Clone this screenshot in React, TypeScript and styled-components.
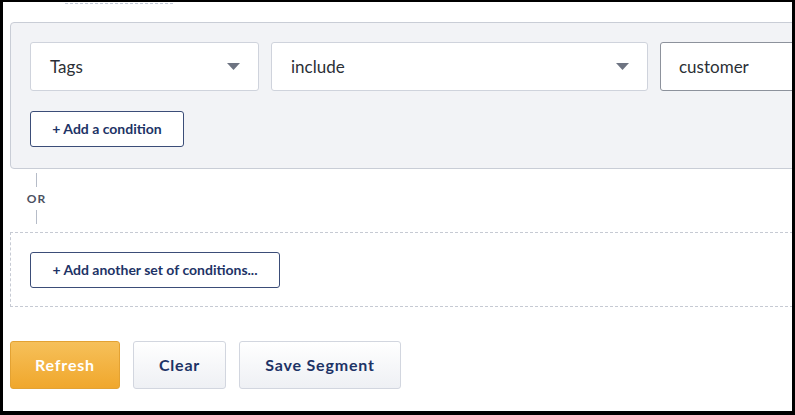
import styled, { createGlobalStyle } from "styled-components";
import React from "react";

const Global = createGlobalStyle`
    html, body {
        margin: 0;
        padding: 0;
        background: #ffffff;
    }
    * {
        box-sizing: border-box;
    }
`;

function Caret() {
    return (
        <svg width="13" height="7" viewBox="0 0 13 7">
            <path d="M0 0 L13 0 L6.5 7 Z" fill="#6e7482" />
        </svg>
    );
}

export default function App() {
    return (
        <Frame>
            <Global />
            <Content>
                <TopRule />
                <ConditionSet>
                    <FieldRow>
                        <Select width={229}>
                            <span>Tags</span>
                            <Caret />
                        </Select>
                        <Select width={377}>
                            <span>include</span>
                            <Caret />
                        </Select>
                        <TextInput defaultValue="customer" />
                    </FieldRow>
                    <OutlineButton width={154}>+ Add a condition</OutlineButton>
                </ConditionSet>

                <Connector>
                    <Stem />
                    <OrLabel>OR</OrLabel>
                    <Stem />
                </Connector>

                <EmptySet>
                    <OutlineButton width={250}>+ Add another set of conditions...</OutlineButton>
                </EmptySet>

                <Actions>
                    <ActionButton primary width={110}>Refresh</ActionButton>
                    <ActionButton width={93}>Clear</ActionButton>
                    <ActionButton width={162}>Save Segment</ActionButton>
                </Actions>
            </Content>
        </Frame>
    );
}

const Frame = styled.div`
    width: 795px;
    height: 415px;
    border: 3px solid #000000;
    border-top-width: 2px;
    border-bottom-width: 4px;
    overflow: hidden;
    background: #ffffff;
    font-family: 'Lato', 'Open Sans', sans-serif;
`;

const Content = styled.div`
    width: 960px;
    padding-left: 7px;
    display: flex;
    flex-direction: column;
    align-items: flex-start;
`;

const TopRule = styled.div`
    margin-left: 55px;
    margin-top: 1px;
    width: 108px;
    height: 0;
    border-bottom: 1px dashed #c3c9d6;
`;

const ConditionSet = styled.div`
    margin-top: 18px;
    width: 100%;
    background: #f2f3f6;
    border: 1px solid #c9cdd6;
    border-radius: 4px;
    padding: 19px 19px 21px;
    display: flex;
    flex-direction: column;
    align-items: flex-start;
    gap: 20px;
`;

const FieldRow = styled.div`
    display: flex;
    gap: 12px;
`;

const Select = styled.div<{ width: number }>`
    width: ${(p) => p.width}px;
    height: 49px;
    background: #ffffff;
    border: 1px solid #cfd3dc;
    border-radius: 3px;
    display: flex;
    align-items: center;
    justify-content: space-between;
    padding: 0 18px 0 19px;
    font-size: 17px;
    color: #2b2f36;
`;

const TextInput = styled.input`
    width: 220px;
    height: 49px;
    background: #ffffff;
    border: 1px solid #8d929c;
    border-radius: 3px;
    padding: 0 18px;
    font-family: inherit;
    font-size: 17px;
    color: #2b2f36;
    outline: none;
`;

const OutlineButton = styled.button<{ width: number }>`
    width: ${(p) => p.width}px;
    height: 36px;
    background: #ffffff;
    border: 1px solid #3b4d78;
    border-radius: 3px;
    font-family: inherit;
    font-weight: 700;
    font-size: 14px;
    color: #1d3366;
    padding: 0 0 1px;
    cursor: pointer;
`;

const Connector = styled.div`
    width: 52px;
    height: 63px;
    padding-top: 4px;
    display: flex;
    flex-direction: column;
    align-items: center;
    gap: 6px;
`;

const Stem = styled.div`
    width: 1px;
    height: 14px;
    background: #b6bcc8;
`;

const OrLabel = styled.div`
    font-size: 12px;
    font-weight: 700;
    color: #4b5160;
    letter-spacing: 1px;
    line-height: 11px;
    padding-left: 1px;
`;

const EmptySet = styled.div`
    width: 100%;
    height: 75px;
    border: 1px dashed #c6cad3;
    padding: 19px;
`;

const Actions = styled.div`
    margin-top: 34px;
    display: flex;
    gap: 13px;
`;

const ActionButton = styled.button<{ width: number; primary?: boolean }>`
    width: ${(p) => p.width}px;
    height: 48px;
    border-radius: 3px;
    font-family: inherit;
    font-weight: 700;
    font-size: 16px;
    letter-spacing: 0.8px;
    padding: 0 0 2px;
    cursor: pointer;
    border: 1px solid ${(p) => (p.primary ? "#e3a233" : "#d2d6df")};
    color: ${(p) => (p.primary ? "#ffffff" : "#1d3366")};
    background: ${(p) =>
        p.primary
            ? "linear-gradient(#f6c05a, #f0a72c)"
            : "linear-gradient(#ffffff, #eef0f4)"};
`;
